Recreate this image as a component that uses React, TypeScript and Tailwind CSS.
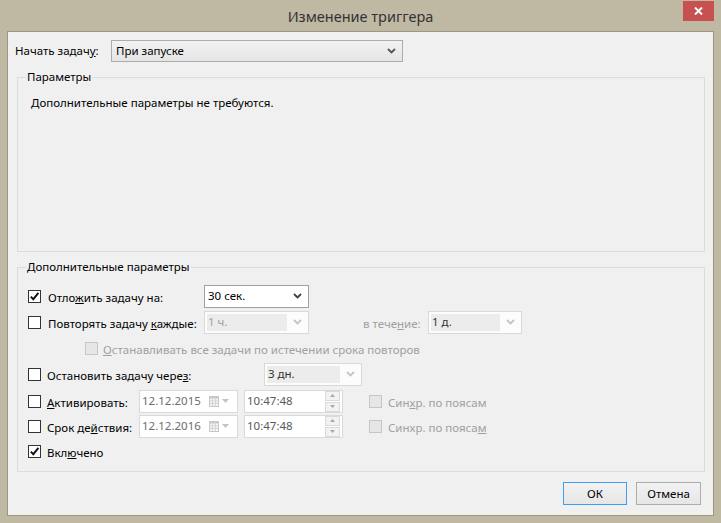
import React from "react";

function Check({ checked = false, disabled = false }: { checked?: boolean; disabled?: boolean }) {
  return (
    <span
      className={
        "flex h-[13px] w-[13px] shrink-0 items-center justify-center border " +
        (disabled ? "border-[#c6c6c6] bg-[#e6e6e6]" : "border-[#333333] bg-white")
      }
    >
      {checked && (
        <svg width="11" height="11" viewBox="0 0 11 11">
          <path d="M1.8 5.6 L4.3 8.2 L9.4 1.8" fill="none" stroke="#111" strokeWidth="1.9" />
        </svg>
      )}
    </span>
  );
}

function Chevron({ color }: { color: string }) {
  return (
    <svg width="9" height="6" viewBox="0 0 9 6" className="shrink-0">
      <path d="M1 1 L4.5 4.5 L8 1" fill="none" stroke={color} strokeWidth="1.8" />
    </svg>
  );
}

function Combo({
  text,
  w,
  enabled = false,
  textColor = "#a0a0a0",
}: {
  text: string;
  w: string;
  enabled?: boolean;
  textColor?: string;
}) {
  if (enabled) {
    return (
      <div className={"flex h-[23px] shrink-0 items-center justify-between border border-[#a0a0a0] bg-white pl-[3px] pr-[6px] " + w}>
        <span className="text-[11.5px] leading-[16px] text-black">{text}</span>
        <Chevron color="#404040" />
      </div>
    );
  }
  return (
    <div className={"flex h-[23px] shrink-0 items-center border border-[#d9d9d9] bg-[#fcfcfc] p-[2px] pr-[6px] " + w}>
      <div className="flex h-full flex-1 items-center bg-[#ececec] pl-[1px]">
        <span className="text-[11.5px] leading-[16px]" style={{ color: textColor }}>
          {text}
        </span>
      </div>
      <div className="ml-[6px]">
        <Chevron color="#c4c4c4" />
      </div>
    </div>
  );
}

function DateBox({ text }: { text: string }) {
  return (
    <div className="flex h-[23px] w-[99px] shrink-0 items-center justify-between border border-[#d9d9d9] bg-white pl-[2px] pr-[8px]">
      <span className="text-[11.5px] leading-[16px] text-[#6d6d6d]">{text}</span>
      <div className="flex items-center gap-[3px]">
        <svg width="10" height="11" viewBox="0 0 10 11">
          <rect x="0.5" y="0.5" width="9" height="10" fill="#f4f4f4" stroke="#c8c8c8" />
          <rect x="0.5" y="0.5" width="9" height="2" fill="#c8c8c8" />
          <path d="M1 5 H9 M1 7.5 H9 M3.5 3 V10 M6.5 3 V10" stroke="#d6d6d6" strokeWidth="1" />
        </svg>
        <svg width="7" height="4" viewBox="0 0 7 4">
          <path d="M0 0 H7 L3.5 4 Z" fill="#c4c4c4" />
        </svg>
      </div>
    </div>
  );
}

function TimeBox() {
  return (
    <div className="flex h-[23px] w-[99px] shrink-0 items-center justify-between border border-[#d9d9d9] bg-white pl-[2px] pr-[2px]">
      <span className="text-[11.5px] leading-[16px] text-[#5a5a5a]">10:47:48</span>
      <div className="flex h-full w-[15px] flex-col gap-[1px]">
        <div className="flex flex-1 items-center justify-center border border-[#dadada] bg-[#f2f2f2]">
          <svg width="5" height="3" viewBox="0 0 5 3">
            <path d="M0 3 H5 L2.5 0 Z" fill="#a8a8a8" />
          </svg>
        </div>
        <div className="flex flex-1 items-center justify-center border border-[#dadada] bg-[#f2f2f2]">
          <svg width="5" height="3" viewBox="0 0 5 3">
            <path d="M0 0 H5 L2.5 3 Z" fill="#a8a8a8" />
          </svg>
        </div>
      </div>
    </div>
  );
}

function Label({ children, w, gray = false }: { children: React.ReactNode; w?: string; gray?: boolean }) {
  return (
    <span className={"shrink-0 whitespace-nowrap text-[11.5px] leading-[16px] " + (gray ? "text-[#a0a0a0] " : "text-black ") + (w ?? "")}>
      {children}
    </span>
  );
}

export default function App() {
  return (
    <div className="flex h-[523px] w-[721px] flex-col bg-[#bfb8a3] font-['Noto_Sans',sans-serif]">
      {/* title bar */}
      <div className="relative flex h-[31px] shrink-0 items-center justify-center">
        <span className="text-[14.5px] leading-[20px] text-[#333333]">Изменение триггера</span>
        <div className="absolute right-[7px] top-[1px] flex h-[20px] w-[31px] items-center justify-center bg-[#c75050]">
          <svg width="9" height="8" viewBox="0 0 9 8">
            <path d="M1 0.5 L8 7.5 M8 0.5 L1 7.5" stroke="#fff" strokeWidth="1.9" />
          </svg>
        </div>
      </div>

      {/* client */}
      <div className="mx-[7px] flex h-[485px] w-[707px] flex-col border border-[#9c9683] bg-[#f0f0f0]">
        {/* start task row */}
        <div className="mt-[8px] flex h-[22px] items-center pl-[7px]">
          <Label w="w-[96px]">
            Начать задач<span className="underline">у</span>:
          </Label>
          <div className="flex h-[22px] w-[292px] items-center justify-between border border-[#acacac] bg-gradient-to-b from-[#f2f2f2] to-[#e5e5e5] pl-[4px] pr-[6px]">
            <span className="text-[11.5px] leading-[16px] text-black">При запуске</span>
            <Chevron color="#555" />
          </div>
        </div>

        {/* group 1 */}
        <fieldset className="ml-[9px] mt-[7px] h-[183px] w-[688px] border border-[#dcdcdc]">
          <legend className="ml-[8px] px-[1px] text-[11.5px] leading-[16px] text-black">Параметры</legend>
          <div className="pl-[13px] pt-[10px] text-[11.5px] leading-[16px] text-black">
            Дополнительные параметры не требуются.
          </div>
        </fieldset>

        {/* group 2 */}
        <fieldset className="ml-[9px] mt-[7px] h-[213px] w-[688px] border border-[#dcdcdc]">
          <legend className="ml-[8px] px-[1px] text-[11.5px] leading-[16px] text-black">Дополнительные параметры</legend>
          <div className="flex flex-col pl-[10px] pt-[10px]">
            {/* r1 */}
            <div className="flex h-[22px] items-center">
              <Check checked />
              <span className="ml-[7px]">
                <Label w="w-[156px] inline-block">
                  Отло<span className="underline">ж</span>ить задачу на:
                </Label>
              </span>
              <Combo text="30 сек." w="w-[105px]" enabled />
            </div>
            {/* r2 */}
            <div className="mt-[4px] flex h-[22px] items-center">
              <Check />
              <span className="ml-[7px]">
                <Label w="w-[156px] inline-block">
                  Повторять задачу <span className="underline">к</span>аждые:
                </Label>
              </span>
              <Combo text="1 ч." w="w-[105px]" />
              <span className="ml-[54px]">
                <Label w="w-[65px] inline-block" gray>
                  в тече<span className="underline">н</span>ие:
                </Label>
              </span>
              <Combo text="1 д." w="w-[94px]" textColor="#333333" />
            </div>
            {/* r3 */}
            <div className="mt-[4px] flex h-[22px] items-center pl-[57px]">
              <Check disabled />
              <span className="ml-[5px]">
                <Label gray>
                  <span className="underline">О</span>станавливать все задачи по истечении срока повторов
                </Label>
              </span>
            </div>
            {/* r4 */}
            <div className="mt-[4px] flex h-[22px] items-center">
              <Check />
              <span className="ml-[6px]">
                <Label w="w-[217px] inline-block">
                  Остановить задачу чере<span className="underline">з</span>:
                </Label>
              </span>
              <Combo text="3 дн." w="w-[98px]" textColor="#333333" />
            </div>
            {/* r5 */}
            <div className="mt-[5px] flex h-[22px] items-center">
              <Check />
              <span className="ml-[6px]">
                <Label w="w-[92px] inline-block">
                  <span className="underline">А</span>ктивировать:
                </Label>
              </span>
              <DateBox text="12.12.2015" />
              <div className="ml-[6px]">
                <TimeBox />
              </div>
              <div className="ml-[26px] flex items-center">
                <Check disabled />
                <span className="ml-[6px]">
                  <Label gray>
                    Син<span className="underline">х</span>р. по поясам
                  </Label>
                </span>
              </div>
            </div>
            {/* r6 */}
            <div className="mt-[3px] flex h-[22px] items-center">
              <Check />
              <span className="ml-[6px]">
                <Label w="w-[92px] inline-block">
                  Срок де<span className="underline">й</span>ствия:
                </Label>
              </span>
              <DateBox text="12.12.2016" />
              <div className="ml-[6px]">
                <TimeBox />
              </div>
              <div className="ml-[26px] flex items-center">
                <Check disabled />
                <span className="ml-[6px]">
                  <Label gray>
                    Синхр. по пояса<span className="underline">м</span>
                  </Label>
                </span>
              </div>
            </div>
            {/* r7 */}
            <div className="mt-[4px] flex h-[20px] items-center">
              <Check checked />
              <span className="ml-[6px]">
                <Label>
                  Вкл<span className="underline">ю</span>чено
                </Label>
              </span>
            </div>
          </div>
        </fieldset>

        {/* buttons */}
        <div className="mt-[10px] flex justify-end gap-[9px] pr-[12px]">
          <button className="flex h-[23px] w-[64px] items-center justify-center border border-[#3c9ef5] bg-gradient-to-b from-[#f2f2f2] to-[#e6e6e6] text-[11.5px] leading-[16px] text-black">
            ОК
          </button>
          <button className="flex h-[23px] w-[65px] items-center justify-center border border-[#adadad] bg-gradient-to-b from-[#f2f2f2] to-[#e6e6e6] text-[11.5px] leading-[16px] text-black">
            Отмена
          </button>
        </div>
      </div>
    </div>
  );
}
